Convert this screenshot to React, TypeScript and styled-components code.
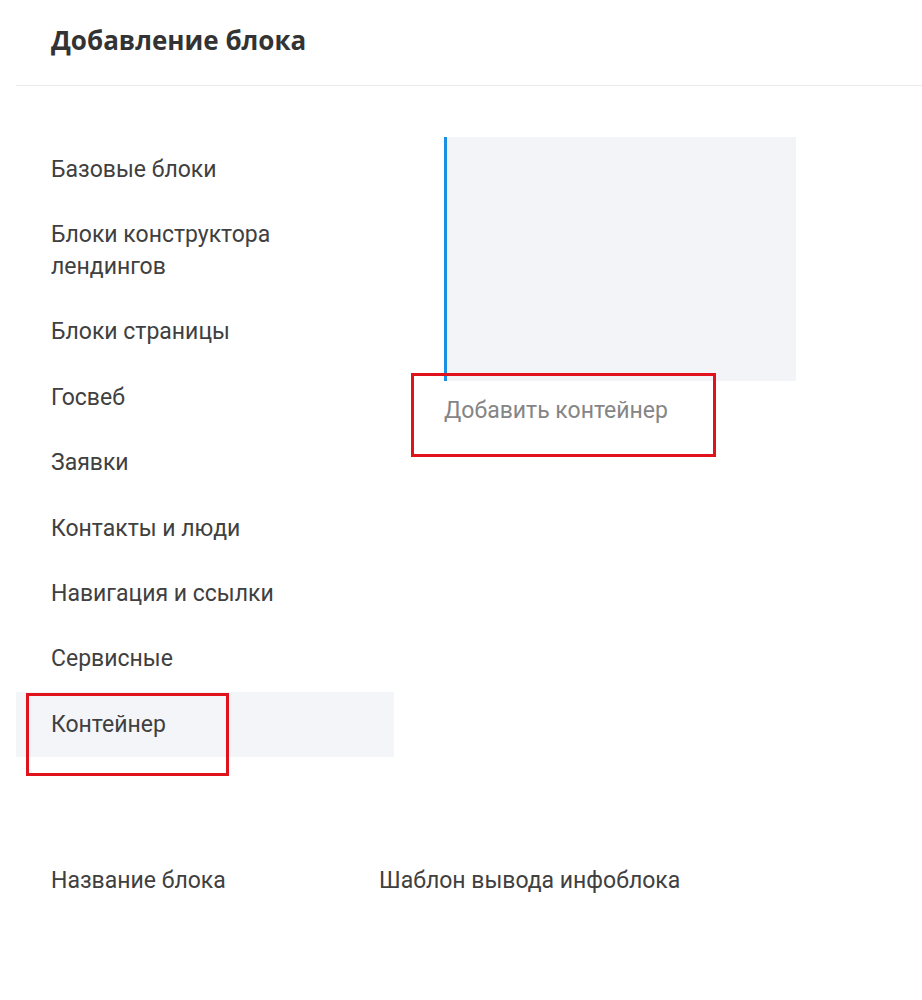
import React from "react";
import styled, { createGlobalStyle } from "styled-components";

const GlobalStyle = createGlobalStyle`
  html, body {
    margin: 0;
    padding: 0;
    background: #fff;
  }
  body {
    font-family: Roboto, "Liberation Sans", sans-serif;
    color: #3a3a3a;
  }
`;

const Page = styled.div`
  width: 922px;
  height: 1000px;
  overflow: hidden;
  background: #fff;
`;

const Header = styled.div`
  margin-left: 16px;
  height: 86px;
  border-bottom: 1px solid #ececec;
  box-sizing: border-box;
  padding: 22px 0 0 35px;
`;

const Title = styled.h1`
  margin: 0;
  font-family: "Open Sans", "Liberation Sans", sans-serif;
  font-weight: 700;
  font-size: 26px;
  line-height: 36px;
  color: #333;
`;

const Body = styled.div`
  display: grid;
  grid-template-columns: 378px 350px;
  column-gap: 50px;
  padding: 51px 0 0 16px;
`;

const Menu = styled.ul`
  list-style: none;
  margin: 0;
  padding: 0;
`;

const MenuItem = styled.li<{ $active?: boolean }>`
  position: relative;
  padding: 16.7px 20px 16.7px 35px;
  font-size: 23px;
  line-height: 32px;
  color: #404040;
  background: ${(p) => (p.$active ? "#f4f5f8" : "transparent")};
`;

const Preview = styled.div`
  position: relative;
`;

const PreviewCard = styled.div`
  height: 244px;
  width: 349px;
  background: #f3f4f7;
  border-left: 3px solid #1a8fe3;
`;

const PreviewLabel = styled.div`
  padding-top: 15px;
  font-size: 23px;
  line-height: 30px;
  color: #858585;
`;

const Mark = styled.div<{ $w: number; $h: number; $x: number; $y: number }>`
  position: absolute;
  left: ${(p) => p.$x}px;
  top: ${(p) => p.$y}px;
  width: ${(p) => p.$w}px;
  height: ${(p) => p.$h}px;
  border: 3px solid #e0121b;
  box-sizing: border-box;
  pointer-events: none;
`;

const Footer = styled.div`
  display: grid;
  grid-template-columns: 328px auto;
  padding: 109px 0 0 51px;
  font-size: 23px;
  line-height: 30px;
  color: #404040;
`;

const items = [
  "Базовые блоки",
  "Блоки конструктора лендингов",
  "Блоки страницы",
  "Госвеб",
  "Заявки",
  "Контакты и люди",
  "Навигация и ссылки",
  "Сервисные",
];

export default function App() {
  return (
    <Page>
      <GlobalStyle />
      <Header>
        <Title>Добавление блока</Title>
      </Header>
      <Body>
        <Menu>
          {items.map((label) => (
            <MenuItem key={label}>
              {label === "Блоки конструктора лендингов" ? (
                <>
                  Блоки конструктора
                  <br />
                  лендингов
                </>
              ) : (
                label
              )}
            </MenuItem>
          ))}
          <MenuItem $active>
            Контейнер
            <Mark $x={10} $y={1} $w={203} $h={83} />
          </MenuItem>
        </Menu>
        <Preview>
          <PreviewCard />
          <PreviewLabel>Добавить контейнер</PreviewLabel>
          <Mark $x={-33} $y={236} $w={305} $h={84} />
        </Preview>
      </Body>
      <Footer>
        <div>Название блока</div>
        <div>Шаблон вывода инфоблока</div>
      </Footer>
    </Page>
  );
}
